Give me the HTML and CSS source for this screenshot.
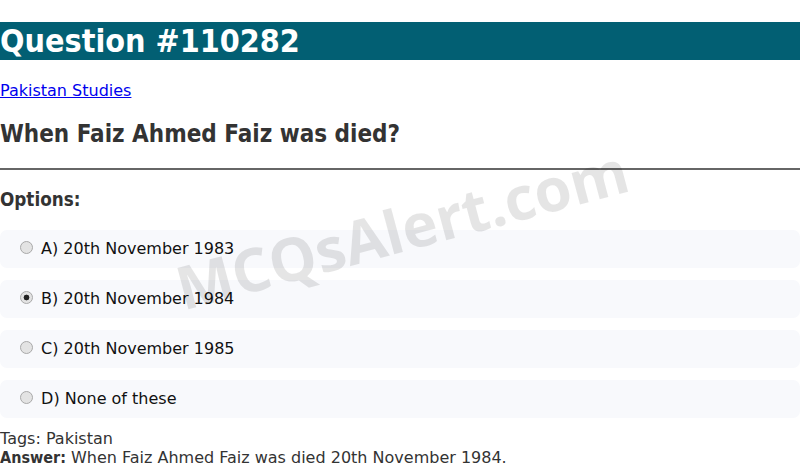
FILE: index.html
```html
<!DOCTYPE html>
<html>
<head>
<meta charset="utf-8">
<link rel="stylesheet" href="styles.css">
</head>
<body>
<h1 class="title">Question #110282</h1>
<p class="cat"><a href="#">Pakistan Studies</a></p>
<h2 class="question">When Faiz Ahmed Faiz was died?</h2>
<hr class="rule">
<h3 class="opts-head">Options:</h3>
<div class="options">
  <label class="option"><input type="radio" name="o"> A) 20th November 1983</label>
  <label class="option"><input type="radio" name="o" checked> B) 20th November 1984</label>
  <label class="option"><input type="radio" name="o"> C) 20th November 1985</label>
  <label class="option"><input type="radio" name="o"> D) None of these</label>
</div>
<div class="tags">Tags: Pakistan</div>
<div class="answer"><b class="ans-label">Answer:</b> When Faiz Ahmed Faiz was died 20th November 1984.</div>
<div class="watermark">MCQsAlert.com</div>
</body>
</html>
```

FILE: styles.css
```css
html, body {
  margin: 0;
  padding: 0;
  background: #fff;
}
body {
  font-family: "DejaVu Sans", sans-serif;
  font-size: 16px;
  color: #333;
  position: relative;
  overflow: hidden;
  height: 467px;
}
.title, .question, .opts-head, .ans-label {
  font-family: "DejaVu Sans Condensed", "DejaVu Sans", sans-serif;
  font-weight: 700;
}
.title {
  background: #025f73;
  color: #fff;
  font-size: 32px;
  margin: 22px 0 21.44px;
}
.cat {
  margin: 16px 0;
}
.cat a {
  color: #0000ee;
}
.question {
  font-size: 24px;
  margin: 19.92px 0;
  color: #333;
}
.rule {
  margin: 8px 0;
  border: 0;
  border-top: 2px solid #666;
  height: 0;
}
.opts-head {
  font-size: 18.72px;
  margin: 18.72px 0 20px;
  color: #333;
}
.options {
  display: flex;
  flex-direction: column;
  gap: 12px;
  margin-bottom: 12px;
}
.option {
  display: flex;
  align-items: center;
  background: #f8f9fc;
  border-radius: 7px;
  padding: 10px 15px;
  height: 18px;
  color: #111;
  line-height: 18px;
  white-space: pre;
}
.option input {
  appearance: none;
  -webkit-appearance: none;
  width: 13px;
  height: 13px;
  margin: 0 3px 0 5px;
  border: 1px solid #a9a9a9;
  border-radius: 50%;
  background: #e3e3e3;
  box-sizing: border-box;
  position: relative;
  top: -1px;
  flex: none;
}
.option input:checked {
  background: radial-gradient(circle, #222 0 2.6px, #e3e3e3 3.2px);
}
.tags, .answer {
  color: #333;
  line-height: 18.6px;
}
.watermark {
  position: absolute;
  left: 0;
  right: 0;
  top: 188px;
  padding-left: 4px;
  text-align: center;
  font-family: "Open Sans", sans-serif;
  font-weight: 700;
  font-size: 60px;
  color: rgba(0, 0, 0, 0.1);
  transform: rotate(-15deg);
  pointer-events: none;
  white-space: nowrap;
}
```
